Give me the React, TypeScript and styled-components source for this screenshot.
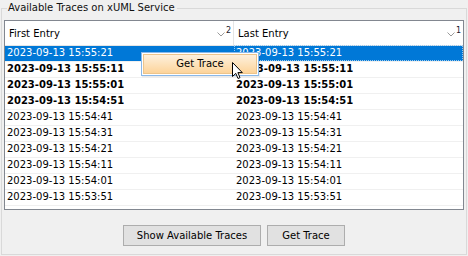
import React from "react";
import styled, { createGlobalStyle } from "styled-components";

const GlobalStyle = createGlobalStyle`
  html, body {
    margin: 0;
    padding: 0;
    background: #f0f0f0;
  }
  body {
    font-family: "DejaVu Sans", Tahoma, sans-serif;
    font-size: 10px;
    color: #000000;
  }
`;

const Frame = styled.div`
  width: 468px;
  height: 256px;
  box-sizing: border-box;
  padding: 2px 1px 1px 1px;
  position: relative;
`;

const GroupBox = styled.fieldset`
  margin: 0;
  height: 253px;
  box-sizing: border-box;
  border: 1px solid #d9d9d9;
  padding: 6px 2px 8px 2px;
  display: flex;
  flex-direction: column;
  min-width: 0;
`;

const Legend = styled.legend`
  margin-left: 3px;
  padding: 0 2px 0 1px;
  line-height: 12px;
  font-size: 10px;
  color: #111111;
`;

const TableBox = styled.div`
  height: 190px;
  box-sizing: border-box;
  border: 1px solid #828790;
  background: #ffffff;
  display: flex;
  flex-direction: column;
`;

const HeaderRow = styled.div`
  display: flex;
  height: 25px;
  box-sizing: border-box;
  border-bottom: 1px solid #e5e5e5;
`;

const HeaderCell = styled.div<{ $first?: boolean }>`
  box-sizing: border-box;
  display: flex;
  align-items: center;
  padding: 0 2px 0 4px;
  ${(p) => (p.$first ? "width: 229px; border-right: 1px solid #e5e5e5;" : "flex: 1;")}
`;

const HeaderLabel = styled.span`
  flex: 1;
  padding-top: 1px;
`;

const SortMark = styled.span`
  display: flex;
  align-items: flex-start;
  gap: 1px;
  height: 12px;
`;

const SortRank = styled.span`
  font-size: 8px;
  line-height: 8px;
  color: #1a1a2e;
`;

const Row = styled.div<{ $selected?: boolean; $bold?: boolean }>`
  display: flex;
  height: 16px;
  box-sizing: border-box;
  border-bottom: 1px solid #f0f0f0;
  background: ${(p) => (p.$selected ? "#0078d7" : "#ffffff")};
  color: ${(p) => (p.$selected ? "#ffffff" : "#000000")};
  font-weight: ${(p) => (p.$bold ? 700 : 400)};
  line-height: 14px;
`;

const Cell = styled.div<{ $first?: boolean; $focus?: boolean }>`
  box-sizing: border-box;
  padding-left: 1px;
  white-space: nowrap;
  overflow: hidden;
  ${(p) => (p.$first ? "width: 229px;" : "flex: 1;")}
  border: 1px solid ${(p) => (p.$focus ? "#99c9ef" : "transparent")};
  border-style: ${(p) => (p.$focus ? "dotted" : "solid")};
  margin-top: -1px;
`;

const ButtonBar = styled.div`
  flex: 1;
  display: flex;
  justify-content: center;
  align-items: flex-end;
  gap: 6px;
`;

const PushButton = styled.button<{ $width: number }>`
  width: ${(p) => p.$width}px;
  height: 21px;
  margin: 0;
  padding: 0;
  border: 1px solid #adadad;
  background: #e1e1e1;
  font-family: "DejaVu Sans", Tahoma, sans-serif;
  font-size: 10px;
  color: #000000;
`;

const PopupMenu = styled.div`
  position: absolute;
  left: 141px;
  top: 52px;
  width: 118px;
  height: 24px;
  box-sizing: border-box;
  border: 1px solid #8ab8e8;
  background: #ffffff;
  padding: 1px;
  box-shadow: 1px 1px 1px rgba(0, 0, 0, 0.08);
`;

const PopupItem = styled.div`
  height: 100%;
  box-sizing: border-box;
  border: 1px solid #ecc48c;
  background: linear-gradient(#fdf0dd, #fdd49a);
  display: flex;
  align-items: center;
  justify-content: center;
  padding-bottom: 1px;
`;

const Cursor = styled.svg`
  position: absolute;
  left: 231px;
  top: 61px;
`;

type Entry = { first: string; last: string; bold?: boolean; selected?: boolean };

const entries: Entry[] = [
  { first: "2023-09-13 15:55:21", last: "2023-09-13 15:55:21", selected: true },
  { first: "2023-09-13 15:55:11", last: "2023-09-13 15:55:11", bold: true },
  { first: "2023-09-13 15:55:01", last: "2023-09-13 15:55:01", bold: true },
  { first: "2023-09-13 15:54:51", last: "2023-09-13 15:54:51", bold: true },
  { first: "2023-09-13 15:54:41", last: "2023-09-13 15:54:41" },
  { first: "2023-09-13 15:54:31", last: "2023-09-13 15:54:31" },
  { first: "2023-09-13 15:54:21", last: "2023-09-13 15:54:21" },
  { first: "2023-09-13 15:54:11", last: "2023-09-13 15:54:11" },
  { first: "2023-09-13 15:54:01", last: "2023-09-13 15:54:01" },
  { first: "2023-09-13 15:53:51", last: "2023-09-13 15:53:51" },
];

const Chevron = () => (
  <svg width="8" height="5" viewBox="0 0 8 5" style={{ marginTop: 5 }}>
    <path d="M0.5 0.5 L4 4 L7.5 0.5" fill="none" stroke="#9a9a9a" strokeWidth="1" />
  </svg>
);

const SortIndicator = ({ rank }: { rank: number }) => (
  <SortMark>
    <Chevron />
    <SortRank>{rank}</SortRank>
  </SortMark>
);

const App = () => {
  return (
    <Frame>
      <GlobalStyle />
      <GroupBox>
        <Legend>Available Traces on xUML Service</Legend>
        <TableBox>
          <HeaderRow>
            <HeaderCell $first>
              <HeaderLabel>First Entry</HeaderLabel>
              <SortIndicator rank={2} />
            </HeaderCell>
            <HeaderCell>
              <HeaderLabel>Last Entry</HeaderLabel>
              <SortIndicator rank={1} />
            </HeaderCell>
          </HeaderRow>
          {entries.map((e, i) => (
            <Row key={i} $selected={e.selected} $bold={e.bold}>
              <Cell $first>{e.first}</Cell>
              <Cell $focus={e.selected}>{e.last}</Cell>
            </Row>
          ))}
        </TableBox>
        <ButtonBar>
          <PushButton $width={138}>Show Available Traces</PushButton>
          <PushButton $width={78}>Get Trace</PushButton>
        </ButtonBar>
      </GroupBox>
      <PopupMenu>
        <PopupItem>Get Trace</PopupItem>
      </PopupMenu>
      <Cursor width="13" height="19" viewBox="0 0 13 19">
        <path
          d="M1.5 1.5 L1.5 15.5 L4.8 12.4 L7 17.5 L9 16.6 L6.9 11.6 L11.3 11.6 Z"
          fill="#ffffff"
          stroke="#000000"
          strokeWidth="1"
          strokeLinejoin="miter"
        />
      </Cursor>
    </Frame>
  );
};

export default App;
